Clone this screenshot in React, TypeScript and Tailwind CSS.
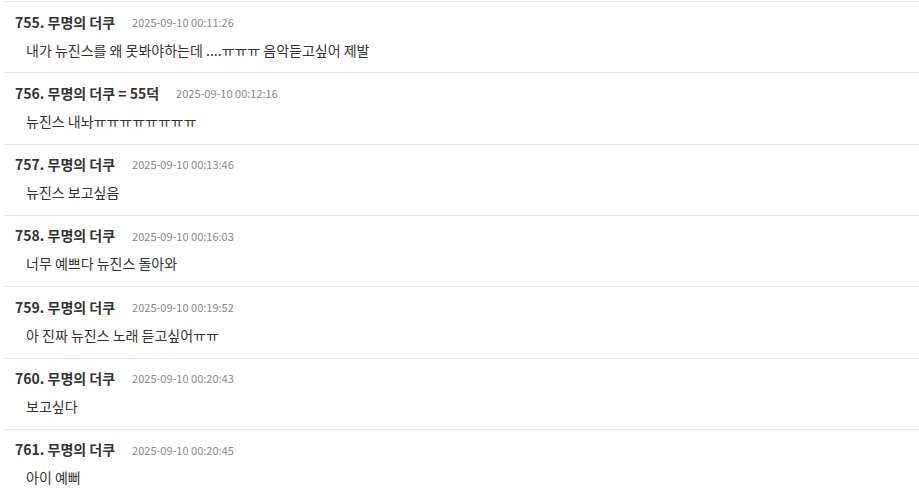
import React from 'react';

type Comment = {
    no: number;
    nick: string;
    date: string;
    body: string;
};

const COMMENTS: Comment[] = [
    { no: 755, nick: '무명의 더쿠', date: '2025-09-10 00:11:26', body: '내가 뉴진스를 왜 못봐야하는데 ....ㅠㅠㅠ 음악듣고싶어 제발' },
    { no: 756, nick: '무명의 더쿠 = 55덕', date: '2025-09-10 00:12:16', body: '뉴진스 내놔ㅠㅠㅠㅠㅠㅠㅠㅠ' },
    { no: 757, nick: '무명의 더쿠', date: '2025-09-10 00:13:46', body: '뉴진스 보고싶음' },
    { no: 758, nick: '무명의 더쿠', date: '2025-09-10 00:16:03', body: '너무 예쁘다 뉴진스 돌아와' },
    { no: 759, nick: '무명의 더쿠', date: '2025-09-10 00:19:52', body: '아 진짜 뉴진스 노래 듣고싶어ㅠㅠ' },
    { no: 760, nick: '무명의 더쿠', date: '2025-09-10 00:20:43', body: '보고싶다' },
    { no: 761, nick: '무명의 더쿠', date: '2025-09-10 00:20:45', body: '아이 예뻐' },
];

const CommentRow: React.FC<{ c: Comment }> = ({ c }) => (
    <li className="border-t border-[#e6e6e6] pt-[10px] pb-[12.33px]">
        <div className="flex items-center h-5 pl-[10px]">
            <span className="text-[14px] font-bold text-[#333]">{c.no}. {c.nick}</span>
            <span className="ml-[17px] text-[11px] text-[#888]">{c.date}</span>
        </div>
        <div className="mt-2 h-5 flex items-center pl-[21px] text-[14px] text-[#333]">
            {c.body}
        </div>
    </li>
);

const App: React.FC = () => {
    return (
        <div className="min-h-screen bg-white font-['Noto_Sans_CJK_KR',sans-serif]">
            <ul className="ml-[5px] pt-[1px]">
                {COMMENTS.map(c => <CommentRow key={c.no} c={c} />)}
            </ul>
        </div>
    );
};

export default App;
